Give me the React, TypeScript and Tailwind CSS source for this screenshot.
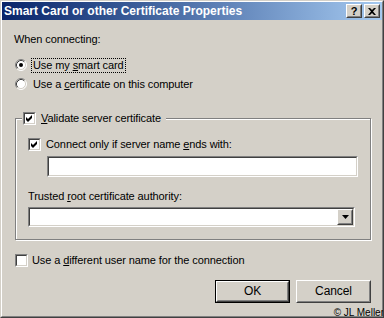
import React from "react";

const font = "font-['Liberation_Sans',Arial,sans-serif]";

function Radio({ checked }: { checked?: boolean }) {
  return (
    <svg width="12" height="12" viewBox="0 0 12 12" className="shrink-0">
      <circle cx="6" cy="6" r="5" fill="#fff" />
      <path d="M2.11 9.89 A5.5 5.5 0 0 1 9.89 2.11" stroke="#808080" fill="none" />
      <path d="M9.89 2.11 A5.5 5.5 0 0 1 2.11 9.89" stroke="#fff" fill="none" />
      <path d="M2.82 9.18 A4.5 4.5 0 0 1 9.18 2.82" stroke="#404040" fill="none" />
      <path d="M9.18 2.82 A4.5 4.5 0 0 1 2.82 9.18" stroke="#d4d0c8" fill="none" />
      {checked && <circle cx="6" cy="6" r="2" fill="#000" />}
    </svg>
  );
}

function Check({ checked }: { checked?: boolean }) {
  return (
    <div className="w-[13px] h-[13px] shrink-0 border border-t-[#808080] border-l-[#808080] border-r-white border-b-white">
      <div className="w-full h-full border border-t-[#404040] border-l-[#404040] border-r-[#d4d0c8] border-b-[#d4d0c8] bg-white">
        {checked && (
          <svg width="9" height="9" viewBox="0 0 9 9">
            <polygon points="1,3 3,5 7,1 7,4 3,8 1,6" fill="#000" />
          </svg>
        )}
      </div>
    </div>
  );
}

function Sunken({ className, children }: { className?: string; children?: React.ReactNode }) {
  return (
    <div className={`border border-t-[#808080] border-l-[#808080] border-r-white border-b-white ${className ?? ""}`}>
      <div className="h-full border border-t-[#404040] border-l-[#404040] border-r-[#d4d0c8] border-b-[#d4d0c8] bg-white flex justify-end">
        {children}
      </div>
    </div>
  );
}

function Raised({ className, children }: { className?: string; children?: React.ReactNode }) {
  return (
    <div className={`border border-t-white border-l-white border-r-[#404040] border-b-[#404040] bg-[#d4d0c8] ${className ?? ""}`}>
      <div className="w-full h-full border border-t-[#d4d0c8] border-l-[#d4d0c8] border-r-[#808080] border-b-[#808080] flex items-center justify-center">
        {children}
      </div>
    </div>
  );
}

export default function App() {
  return (
    <div className={`${font} relative w-[384px] h-[318px] overflow-hidden text-[11px] tracking-[-0.1px] leading-[15px] text-black bg-[#d4d0c8] border border-t-[#d4d0c8] border-l-[#d4d0c8] border-r-[#404040] border-b-[#404040]`}>
      <div className="h-full border border-t-white border-l-white border-r-[#808080] border-b-[#808080] flex flex-col">
        {/* Title bar */}
        <div className="h-[18px] bg-linear-to-r from-[#0a246a] to-[#a6caf0] flex items-center pl-[2px] pr-[2px]">
          <span className="text-white font-bold text-[12px] tracking-normal leading-[14px]">Smart Card or other Certificate Properties</span>
          <div className="ml-auto flex items-center">
            <Raised className="w-[16px] h-[14px]">
              <span className="text-[11px] leading-[10px] font-bold">?</span>
            </Raised>
            <Raised className="w-[16px] h-[14px] ml-[2px]">
              <svg width="8" height="7" viewBox="0 0 8 7">
                <path d="M0 0h2l2 2 2-2h2L5 3.5 8 7H6L4 5 2 7H0l3-3.5z" fill="#000" />
              </svg>
            </Raised>
          </div>
        </div>

        {/* Body */}
        <div className="flex flex-col pl-[13px]">
          <div className="mt-[12px] ml-[-1px]">When connecting:</div>

          <div className="mt-[10px] h-[16px] flex items-center">
            <Radio checked />
            <span className="ml-[4px] px-[1px] border border-dotted border-black leading-[13px]">
              Use my <u>s</u>mart card
            </span>
          </div>
          <div className="mt-[3px] h-[16px] flex items-center">
            <Radio />
            <span className="ml-[4px] px-[1px] border border-transparent leading-[13px]">
              Use a <u>c</u>ertificate on this computer
            </span>
          </div>

          <fieldset className="mt-[19px] w-[356px] border border-[#808080] shadow-[1px_1px_0_#fff,inset_1px_1px_0_#fff] pl-[6px] pb-[12px]">
            <legend className="h-[14px] flex items-center px-[1px] pr-[5px] bg-[#d4d0c8]">
              <Check checked />
              <span className="ml-[5px]">
                <u>V</u>alidate server certificate
              </span>
            </legend>

            <div className="ml-[6px] mt-[13px] h-[13px] flex items-center">
              <Check checked />
              <span className="ml-[5px]">
                Connect only if server name <u>e</u>nds with:
              </span>
            </div>
            <Sunken className="ml-[25px] mt-[5px] w-[311px] h-[21px]" />

            <div className="ml-[6px] mt-[12px]">
              Trusted <u>r</u>oot certificate authority:
            </div>
            <Sunken className="ml-[6px] mt-[3px] w-[327px] h-[20px]">
              <Raised className="w-[16px] h-full">
                <svg width="7" height="4" viewBox="0 0 7 4">
                  <path d="M0 0h7L3.5 4z" fill="#000" />
                </svg>
              </Raised>
            </Sunken>
          </fieldset>

          <div className="mt-[14px] h-[13px] flex items-center">
            <Check />
            <span className="ml-[4px]">
              Use a <u>d</u>ifferent user name for the connection
            </span>
          </div>

          <div className="mt-[13px] w-[356px] flex justify-end gap-[6px] text-[12px]">
            <div className="border border-black">
              <Raised className="w-[73px] h-[21px]">OK</Raised>
            </div>
            <Raised className="w-[75px] h-[23px]">Cancel</Raised>
          </div>
        </div>
      </div>
      <span className="absolute right-[-1px] bottom-[-1px] text-[10px] tracking-normal leading-[11px]">© JL Meller</span>
    </div>
  );
}
